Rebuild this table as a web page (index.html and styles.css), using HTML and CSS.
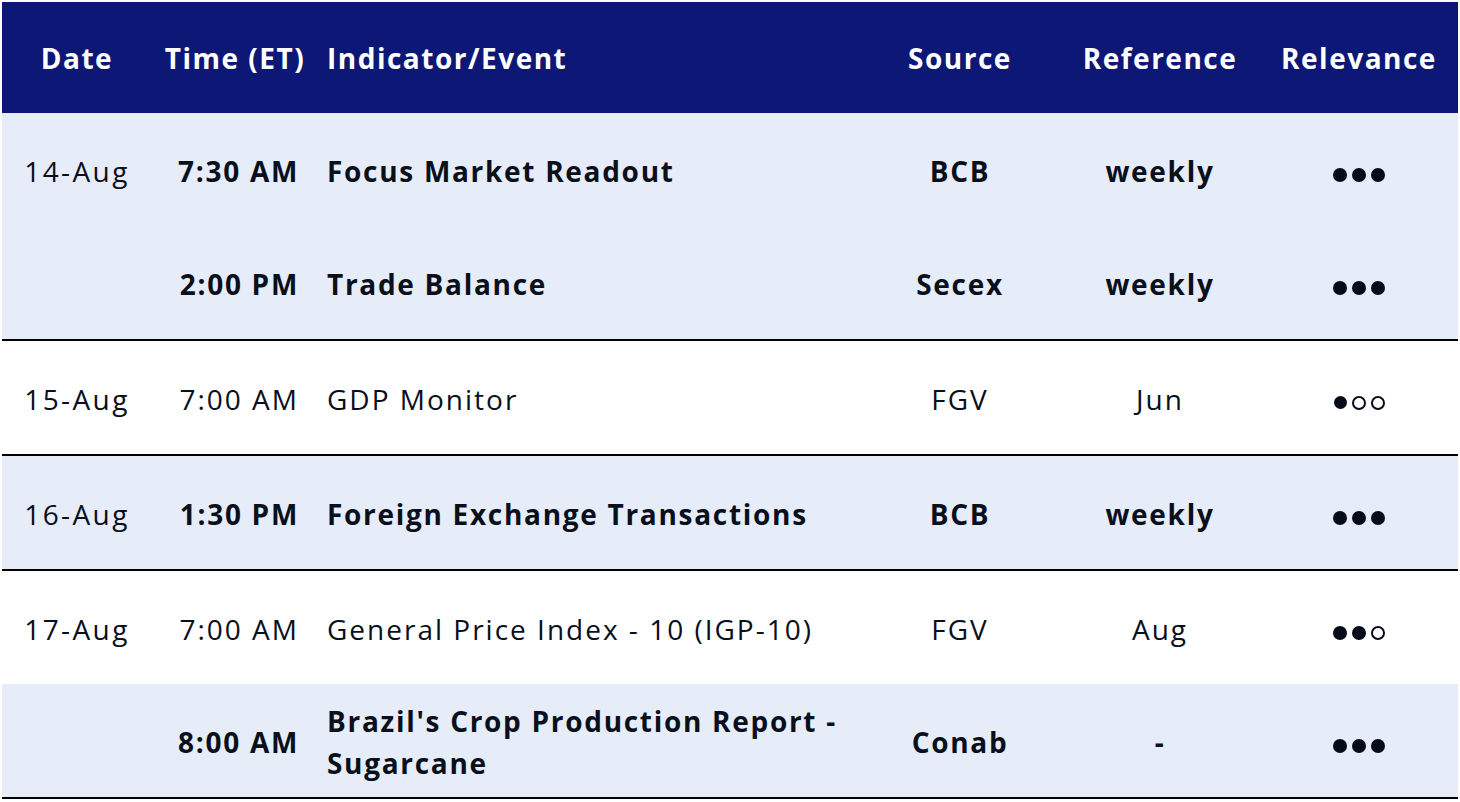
FILE: index.html
```html
<!DOCTYPE html>
<html lang="en">
<head>
<meta charset="utf-8">
<title>Calendar</title>
<link rel="stylesheet" href="styles.css">
</head>
<body>
<table class="cal">
  <colgroup>
    <col class="c-date"><col class="c-time"><col class="c-ind"><col class="c-src"><col class="c-ref"><col class="c-rel">
  </colgroup>
  <thead>
    <tr>
      <th>Date</th><th>Time (ET)</th><th class="left">Indicator/Event</th><th>Source</th><th>Reference</th><th>Relevance</th>
    </tr>
  </thead>
  <tbody>
    <tr class="hi">
      <td class="date">14-Aug</td><td class="time">7:30 AM</td><td class="ind">Focus Market Readout</td><td>BCB</td><td>weekly</td>
      <td><span class="dots"><i class="f"></i><i class="f"></i><i class="f"></i></span></td>
    </tr>
    <tr class="hi end">
      <td class="date"></td><td class="time">2:00 PM</td><td class="ind">Trade Balance</td><td>Secex</td><td>weekly</td>
      <td><span class="dots"><i class="f"></i><i class="f"></i><i class="f"></i></span></td>
    </tr>
    <tr class="lo end">
      <td class="date">15-Aug</td><td class="time">7:00 AM</td><td class="ind">GDP Monitor</td><td>FGV</td><td>Jun</td>
      <td><span class="dots"><i class="f s"></i><i class="o"></i><i class="o"></i></span></td>
    </tr>
    <tr class="hi end">
      <td class="date">16-Aug</td><td class="time">1:30 PM</td><td class="ind">Foreign Exchange Transactions</td><td>BCB</td><td>weekly</td>
      <td><span class="dots"><i class="f"></i><i class="f"></i><i class="f"></i></span></td>
    </tr>
    <tr class="lo">
      <td class="date">17-Aug</td><td class="time">7:00 AM</td><td class="ind">General Price Index - 10 (IGP-10)</td><td>FGV</td><td>Aug</td>
      <td><span class="dots"><i class="f"></i><i class="f"></i><i class="o"></i></span></td>
    </tr>
    <tr class="hi end">
      <td class="date"></td><td class="time">8:00 AM</td><td class="ind">Brazil's Crop Production Report - Sugarcane</td><td>Conab</td><td>-</td>
      <td><span class="dots"><i class="f"></i><i class="f"></i><i class="f"></i></span></td>
    </tr>
  </tbody>
</table>
</body>
</html>
```
FILE: styles.css
```css
html, body {
  margin: 0;
  padding: 0;
  background: #ffffff;
}
body {
  padding: 2px 2px 0 2px;
  font-family: "Open Sans", "Lato", sans-serif;
  color: #0a0f1c;
}
.cal {
  width: 1456px;
  border-collapse: collapse;
  table-layout: fixed;
  font-size: 28px;
}
.c-date { width: 150px; }
.c-time { width: 166px; }
.c-ind { width: 542px; }
.c-src { width: 200px; }
.c-ref { width: 200px; }
.c-rel { width: 198px; }

.cal thead th {
  background: #0d1876;
  color: #ffffff;
  font-weight: 700;
  letter-spacing: 1.5px;
  height: 110px;
  padding: 1px 0 0 0;
  text-align: center;
  white-space: nowrap;
}
.cal thead th.left {
  text-align: left;
  padding-left: 9px;
}
.cal td {
  height: 110px;
  padding: 3px 0 0 0;
  text-align: center;
  vertical-align: middle;
  line-height: 42px;
}
.cal tr.hi td { background: #e6ecf8; font-weight: 700; letter-spacing: 1.7px; }
.cal tr.lo td { background: #ffffff; font-weight: 400; letter-spacing: 2px; }
.cal tr.end td { border-bottom: 2px solid #000000; }
.cal td.date { font-weight: 400 !important; letter-spacing: 2.4px !important; }
.cal td.time {
  text-align: right;
  padding-right: 19px;
  white-space: nowrap;
}
.cal td.ind {
  text-align: left;
  padding-left: 9px;
  padding-right: 16px;
}
.dots {
  display: inline-flex;
  gap: 5px;
  align-items: center;
  vertical-align: middle;
}
.dots i {
  display: block;
  width: 14px;
  height: 14px;
  border-radius: 50%;
  box-sizing: border-box;
}
.dots i.f { background: #050b19; }
.dots i.f.s { width: 13px; height: 13px; }
.dots i.o { border: 2px solid #050b19; background: transparent; }
```
